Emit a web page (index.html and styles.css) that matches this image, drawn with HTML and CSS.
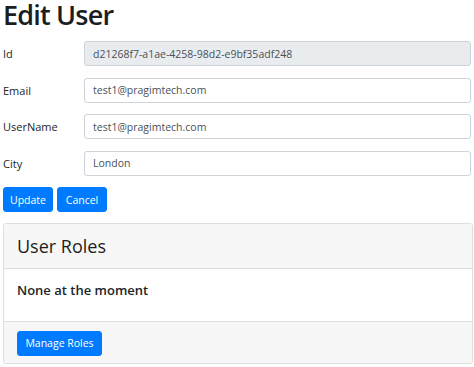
FILE: index.html
```html
<!DOCTYPE html>
<html lang="en">
  <head>
    <meta charset="UTF-8" />
    <meta name="viewport" content="width=device-width, initial-scale=1.0" />
    <title>Edit User</title>
    <link rel="stylesheet" href="styles.css">
  </head>
  <body>
    <div class="page">
      <h1 class="heading">Edit User</h1>
      <form class="user_form">
        <div class="row">
          <label for="id">Id</label>
          <input type="text" id="id" value="d21268f7-a1ae-4258-98d2-e9bf35adf248" disabled />
        </div>
        <div class="row">
          <label for="email">Email</label>
          <input type="text" id="email" value="test1@pragimtech.com" />
        </div>
        <div class="row">
          <label for="username">UserName</label>
          <input type="text" id="username" value="test1@pragimtech.com" />
        </div>
        <div class="row">
          <label for="city">City</label>
          <input type="text" id="city" value="London" />
        </div>
        <div class="btns">
          <button type="submit" class="btn">Update</button>
          <button type="button" class="btn btn_cancel">Cancel</button>
        </div>
      </form>
      <div class="card">
        <div class="card_header">
          <h3>User Roles</h3>
        </div>
        <div class="card_body">
          <h5>None at the moment</h5>
        </div>
        <div class="card_footer">
          <button class="btn btn_roles">Manage Roles</button>
        </div>
      </div>
    </div>
  </body>
</html>
```

FILE: styles.css
```css
* {
  margin: 0;
  padding: 0;
  box-sizing: border-box;
  font-family: "Open Sans", "Noto Sans", sans-serif;
}
body {
  background-color: #fff;
  color: #212529;
}

.page {
  padding: 1px 1px 0 3px;
}

.heading {
  font-size: 27px;
  font-weight: 600;
  letter-spacing: -0.8px;
  line-height: 27px;
  margin-bottom: 13px;
  color: #1b1e21;
}

.user_form {
  margin-right: 2px;
}

.row {
  display: flex;
  align-items: center;
  margin-bottom: 11.5px;
}
.row label {
  width: 81px;
  font-size: 11px;
}
.row input {
  flex: 1;
  height: 25px;
  padding: 0 8px;
  border: 1px solid #ced4da;
  border-radius: 3px;
  font-size: 10.5px;
  color: #495057;
  background-color: #fff;
}
.row input:disabled {
  background-color: #e9ecef;
}

.btns {
  display: flex;
  gap: 4px;
}

.btn {
  height: 25px;
  padding: 0 8px;
  background-color: #007bff;
  color: #fff;
  border: 1px solid #007bff;
  border-radius: 3px;
  font-size: 10.5px;
  cursor: pointer;
}
.btns .btn {
  width: 50px;
  padding: 0;
}

.card {
  margin-top: 11px;
  border: 1px solid rgba(0, 0, 0, 0.125);
  border-radius: 3px;
  overflow: hidden;
}
.card_header {
  height: 45px;
  display: flex;
  align-items: center;
  padding: 0 13px;
  background-color: #f7f7f7;
  border-bottom: 1px solid rgba(0, 0, 0, 0.1);
}
.card_header h3 {
  font-size: 18px;
  font-weight: 500;
  color: #1b1e21;
}
.card_body {
  height: 52px;
  padding: 12px 13px 0;
}
.card_body h5 {
  font-size: 13px;
  font-weight: 600;
}
.card_footer {
  height: 42px;
  padding: 8px 13px 0;
  background-color: #f7f7f7;
  border-top: 1px solid rgba(0, 0, 0, 0.1);
}
.btn_roles {
  width: 85px;
  padding: 0;
}
```
